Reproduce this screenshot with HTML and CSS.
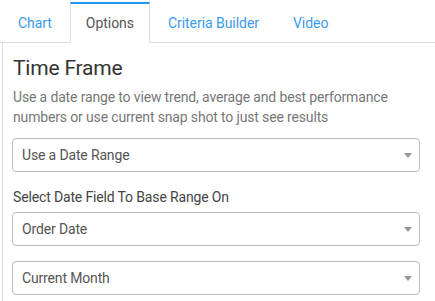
FILE: index.html
```html
<!DOCTYPE html>
<html lang="en">
<head>
  <meta charset="UTF-8">
  <title>Options</title>
  <link rel="stylesheet" href="styles.css">
</head>
<body>
  <ul class="tabs">
    <li class="tab"><a href="#">Chart</a></li>
    <li class="tab active"><a href="#">Options</a></li>
    <li class="tab"><a href="#">Criteria Builder</a></li>
    <li class="tab"><a href="#">Video</a></li>
  </ul>

  <div class="panel">
    <h3>Time Frame</h3>
    <p class="help">Use a date range to view trend, average and best performance numbers or use current snap shot to just see results</p>

    <div class="select">
      <span>Use a Date Range</span>
      <span class="caret"></span>
    </div>

    <label class="field-label">Select Date Field To Base Range On</label>
    <div class="select">
      <span>Order Date</span>
      <span class="caret"></span>
    </div>

    <div class="select last">
      <span>Current Month</span>
      <span class="caret"></span>
    </div>
  </div>
</body>
</html>
```

FILE: styles.css
```css
body {
  font-family: Roboto, "Liberation Sans", Arial, sans-serif;
  font-size: 14px;
  letter-spacing: -0.15px;
  background: white;
  margin: 0;
}

.tabs {
  list-style: none;
  display: flex;
  margin: 2px 0 0 0;
  padding: 0 0 0 2px;
  border-bottom: 1px solid #ddd;
}

.tab {
  margin-right: 2px;
  margin-bottom: -1px;
  border: 1px solid transparent;
  border-top-width: 2px;
}

.tab a {
  display: block;
  padding: 9px 15px;
  line-height: 20px;
  color: #3a9bf0;
  text-decoration: none;
  letter-spacing: -0.05px;
}

.tab.active {
  border-color: #ddd;
  border-top-color: #2196f3;
  border-bottom-color: white;
  background: white;
}

.tab.active a {
  color: #555;
}

.panel {
  margin-left: 2px;
  border-left: 1px solid #ddd;
  padding: 13px 15px 6px 9px;
}

h3 {
  margin: 0 0 0 1px;
  font-size: 21px;
  font-weight: 400;
  line-height: 24px;
  letter-spacing: -0.2px;
  color: #333;
}

.help {
  margin: 7px 0 11px 1px;
  line-height: 20px;
  color: #777;
}

.select {
  display: flex;
  align-items: center;
  justify-content: space-between;
  height: 32px;
  padding: 0 7px 0 9px;
  border: 1px solid #bbb;
  border-radius: 4px;
  color: #555;
  margin-bottom: 15px;
}

.select.last {
  margin-bottom: 0;
}

.caret {
  width: 0;
  height: 0;
  border-left: 4px solid transparent;
  border-right: 4px solid transparent;
  border-top: 5px solid #999;
}

.field-label {
  display: block;
  line-height: 20px;
  margin: 0 0 5px 1px;
  color: #444;
}
```
